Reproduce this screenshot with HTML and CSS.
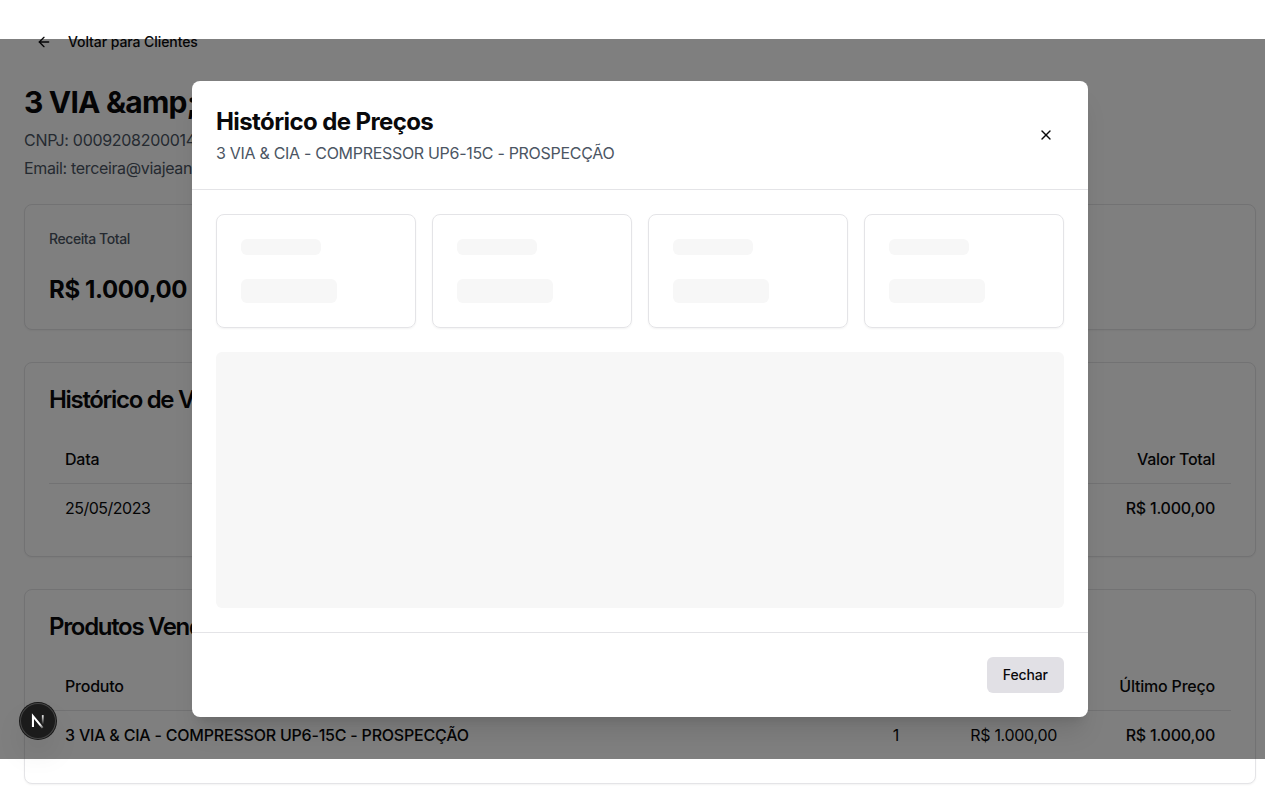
FILE: index.html
```html
<!DOCTYPE html>
<html lang="pt-BR">
<head>
<meta charset="utf-8">
<title>Clientes</title>
<link rel="stylesheet" href="styles.css">
</head>
<body>
<div class="viewport">
  <main class="page">
    <button class="back">
      <svg class="icon" viewBox="0 0 24 24"><path d="m12 19-7-7 7-7"/><path d="M19 12H5"/></svg>
      <span class="back-label">Voltar para Clientes</span>
    </button>
    <header class="customer">
      <h1 class="customer-name">3 VIA &amp;amp; CIA</h1>
      <p class="customer-info cnpj">CNPJ: 00092082000140</p>
      <p class="customer-info">Email: terceira@viajeans.com.br</p>
    </header>
    <section class="card stat">
      <span class="stat-label">Receita Total</span>
      <strong class="stat-value">R$ 1.000,00</strong>
    </section>
    <section class="card">
      <h2 class="card-title">Histórico de Vendas</h2>
      <div class="row head"><span class="cell grow">Data</span><span class="cell last total">Valor Total</span></div>
      <div class="row"><span class="cell grow date">25/05/2023</span><span class="cell last strong">R$ 1.000,00</span></div>
    </section>
    <section class="card">
      <h2 class="card-title">Produtos Vendidos</h2>
      <div class="row head"><span class="cell grow">Produto</span><span class="cell last">Último Preço</span></div>
      <div class="row"><span class="cell grow strong">3 VIA &amp; CIA - COMPRESSOR UP6-15C - PROSPECÇÃO</span><span class="cell qty">1</span><span class="cell average">R$ 1.000,00</span><span class="cell last strong">R$ 1.000,00</span></div>
    </section>
  </main>

  <div class="overlay">
    <div class="dialog">
      <header class="dialog-header">
        <div>
          <h2 class="dialog-title">Histórico de Preços</h2>
          <p class="dialog-sub">3 VIA &amp; CIA - COMPRESSOR UP6-15C - PROSPECÇÃO</p>
        </div>
        <button class="close" aria-label="Fechar">
          <svg class="icon" viewBox="0 0 24 24"><path d="M18 6 6 18"/><path d="m6 6 12 12"/></svg>
        </button>
      </header>
      <div class="dialog-body">
        <div class="tiles">
          <div class="tile"><i class="bone small"></i><i class="bone large"></i></div>
          <div class="tile"><i class="bone small"></i><i class="bone large"></i></div>
          <div class="tile"><i class="bone small"></i><i class="bone large"></i></div>
          <div class="tile"><i class="bone small"></i><i class="bone large"></i></div>
        </div>
        <div class="bone chart"></div>
      </div>
      <footer class="dialog-footer"><button class="dismiss">Fechar</button></footer>
    </div>
  </div>

  <div class="dev-badge">
    <svg class="dev-mark" viewBox="0 0 40 40" fill="none">
      <defs>
        <linearGradient id="diagonal" x1="14" y1="13" x2="26" y2="28" gradientUnits="userSpaceOnUse"><stop offset=".7" stop-color="#fff"/><stop offset="1" stop-color="#fff" stop-opacity=".2"/></linearGradient>
        <linearGradient id="stem" x1="25" y1="13" x2="25" y2="24" gradientUnits="userSpaceOnUse"><stop stop-color="#fff"/><stop offset="1" stop-color="#fff" stop-opacity="0"/></linearGradient>
      </defs>
      <path d="M14.4 26.6V14.6L25.2 27.6" stroke="url(#diagonal)" stroke-width="2.3"/>
      <path d="M25.3 13.5V24" stroke="url(#stem)" stroke-width="2"/>
    </svg>
  </div>
</div>
</body>
</html>
```
FILE: styles.css
```css
* { box-sizing: border-box; }
html, body { margin: 0; overflow: hidden; }
body { font: 400 16px/24px Inter, "Liberation Sans", sans-serif; color: #09090b; background: #fff; }
h1, h2, p { margin: 0; }
button { border: 0; background: none; padding: 0; font: inherit; color: inherit; }
.viewport { position: relative; width: 1265px; height: 808px; overflow: hidden; }
.page { width: 1280px; padding: 24px; display: flex; flex-direction: column; align-items: stretch; }
.icon { width: 16px; height: 16px; flex: none; fill: none; stroke: currentColor; stroke-width: 2; stroke-linecap: round; stroke-linejoin: round; }
.back { display: flex; align-items: center; gap: 16px; height: 36px; padding: 0 12px; align-self: flex-start; font-size: 14px; font-weight: 500; line-height: 20px; }
.back-label { letter-spacing: -.08px; white-space: nowrap; }
.customer { margin: 24px 0; display: flex; flex-direction: column; gap: 4px; white-space: nowrap; }
.customer-name { padding-top: 1px; font-size: 30px; line-height: 35px; font-weight: 700; letter-spacing: -.8px; margin-bottom: 4px; }
.customer-info { color: #4b5563; letter-spacing: -.35px; }
.cnpj { letter-spacing: -.3px; }
.card { border: 1px solid #e4e4e7; border-radius: 8px; padding: 24px; box-shadow: 0 1px 2px rgba(0,0,0,.05); background: #fff; }
.card + .card { margin-top: 32px; }
.stat { display: flex; flex-direction: column; gap: 24px; }
.stat-label { font-size: 14px; line-height: 20px; font-weight: 500; color: #4b5563; letter-spacing: -.42px; }
.stat-value { padding-top: 2px; font-size: 24px; line-height: 30px; font-weight: 700; letter-spacing: -.38px; }
.card-title { padding-top: 2px; font-size: 24px; line-height: 22px; font-weight: 600; letter-spacing: -1.32px; margin-bottom: 24px; }
.row { display: flex; height: 48px; align-items: center; white-space: nowrap; }
.row.head { height: 49px; border-bottom: 1px solid #e4e4e7; font-weight: 500; }
.cell { padding: 0 16px; letter-spacing: -.21px; }
.total, .average { letter-spacing: -.3px; }
.date { letter-spacing: -.5px; }
.grow { flex: 1; }
.strong { font-weight: 500; }
.qty { text-align: right; }
.average { width: 158px; text-align: right; }
.last { width: 158px; text-align: right; }
.overlay { position: absolute; left: 0; top: 39px; width: 1280px; height: 720px; display: flex; align-items: center; justify-content: center; background: rgba(0,0,0,.5); }
.dialog { width: 896px; background: #fff; border-radius: 8px; box-shadow: 0 20px 25px -5px rgba(0,0,0,.1), 0 8px 10px -6px rgba(0,0,0,.1); }
.dialog-header { display: flex; align-items: center; justify-content: space-between; height: 109px; padding: 24px; border-bottom: 1px solid #e4e4e7; }
.dialog-title { padding-top: 2px; font-size: 24px; line-height: 30px; font-weight: 700; letter-spacing: -.6px; }
.dialog-sub { margin-top: 4px; color: #4b5563; letter-spacing: -.3px; }
.close { width: 36px; height: 36px; display: grid; place-items: center; }
.dialog-body { padding: 24px; display: grid; gap: 24px; }
.tiles { display: grid; grid-template-columns: repeat(4, 1fr); gap: 16px; }
.tile { display: grid; gap: 24px; padding: 24px; border: 1px solid #e4e4e7; border-radius: 8px; box-shadow: 0 1px 2px rgba(0,0,0,.05); }
.bone { display: block; background: #f7f7f7; border-radius: 6px; }
.small { width: 80px; height: 16px; }
.large { width: 96px; height: 24px; }
.chart { height: 256px; }
.dialog-footer { display: flex; justify-content: flex-end; padding: 24px; border-top: 1px solid #e4e4e7; }
.dismiss { height: 36px; width: 77.5px; border-radius: 6px; background: #e1e0e5; font-size: 14px; font-weight: 500; letter-spacing: -.15px; }
.dev-badge { position: absolute; left: 20px; top: 703px; width: 36px; height: 36px; border-radius: 50%; background: #1b1b1b; box-shadow: inset 0 0 0 1px #454545, 0 0 0 1px #171717, 0 16px 32px -8px rgba(0,0,0,.24); }
.dev-mark { display: block; width: 36px; height: 36px; }
```
